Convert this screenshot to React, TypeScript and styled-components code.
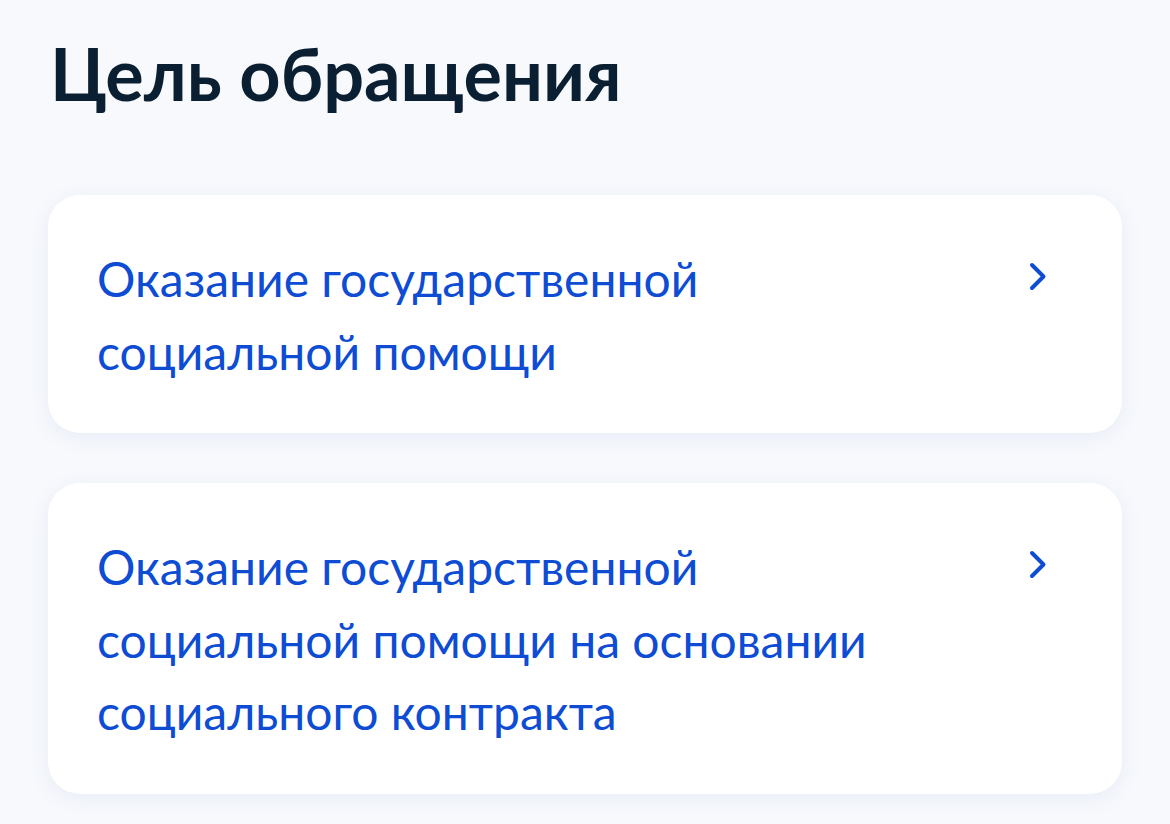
import React from 'react';
import styled, { createGlobalStyle } from 'styled-components';

const GlobalStyle = createGlobalStyle`
  html, body {
    margin: 0;
    padding: 0;
    background: #f7f9fd;
  }
  body {
    font-family: Lato, "Noto Sans", sans-serif;
  }
`;

const Page = styled.div`
  padding: 25px 48px 30px 48px;
`;

const Title = styled.h1`
  margin: 0 0 74px 2px;
  font-size: 72px;
  line-height: 96px;
  font-weight: 700;
  color: #0b1f33;
`;

const List = styled.div`
  display: flex;
  flex-direction: column;
  gap: 50px;
`;

const Card = styled.div`
  display: flex;
  justify-content: space-between;
  align-items: flex-start;
  padding: 48px 74px 45px 49px;
  background: #ffffff;
  border-radius: 32px;
  box-shadow: 0 4px 20px rgba(100, 120, 180, 0.1);
  cursor: pointer;
`;

const Label = styled.div`
  font-size: 48px;
  line-height: 72.5px;
  color: #0d4cd3;
`;

const Chevron = styled.svg`
  flex-shrink: 0;
  margin-top: 19px;
`;

const items = [
  ['Оказание государственной', 'социальной помощи'],
  ['Оказание государственной', 'социальной помощи на основании', 'социального контракта'],
];

export default function App() {
  return (
    <>
      <GlobalStyle />
      <Page>
        <Title>Цель обращения</Title>
        <List>
          {items.map((lines, i) => (
            <Card key={i}>
              <Label>
                {lines.map((l, j) => (
                  <div key={j}>{l}</div>
                ))}
              </Label>
              <Chevron width="20" height="32" viewBox="0 0 20 32">
                <polyline
                  points="4,3 15.5,14.5 4,26"
                  fill="none"
                  stroke="#0d4cd3"
                  strokeWidth="4"
                  strokeLinecap="round"
                  strokeLinejoin="round"
                />
              </Chevron>
            </Card>
          ))}
        </List>
      </Page>
    </>
  );
}
